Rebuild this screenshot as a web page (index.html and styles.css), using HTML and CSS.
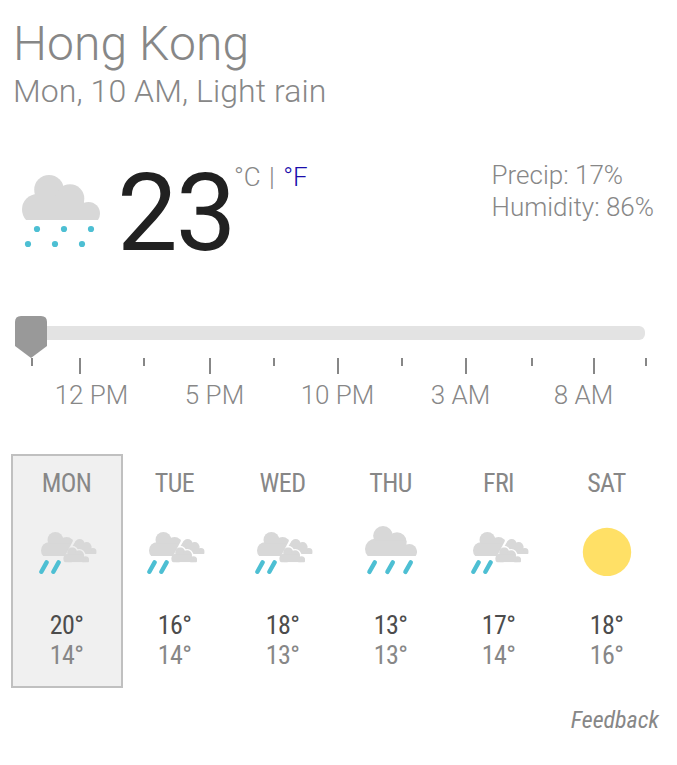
FILE: index.html
```
<!DOCTYPE html>
<html lang="en">
<head>
    <meta charset="UTF-8">
    <meta name="viewport" content="width=device-width, initial-scale=1.0">
    <title>Weather - Hong Kong</title>
    <link rel="stylesheet" href="styles.css">
</head>
<body>
    <!-- Shared icon shapes -->
    <svg class="defs" width="0" height="0">
        <defs>
            <clipPath id="base"><rect width="78" height="45"/></clipPath>
            <g id="puffs">
                <circle cx="15.5" cy="34.5" r="15.5"/>
                <circle cx="27" cy="14.8" r="14.8"/>
                <circle cx="48" cy="23.5" r="14.3"/>
                <circle cx="66.5" cy="38.5" r="11.5"/>
                <rect x="14" y="22" width="48" height="23"/>
                <rect x="60" y="34" width="8" height="11"/>
            </g>
            <g id="cloud" clip-path="url(#base)">
                <use href="#puffs"/>
            </g>
            <mask id="cut-main" maskUnits="userSpaceOnUse" x="0" y="0" width="60" height="50">
                <rect width="60" height="50" fill="#fff"/>
                <path d="M37 4 L26.1 25 H60 V4 Z" fill="#000"/>
            </mask>
            <mask id="cut-back" maskUnits="userSpaceOnUse" x="0" y="0" width="60" height="50">
                <rect width="60" height="50" fill="#fff"/>
                <use href="#puffs" transform="translate(24.2 16.2) scale(.333)" fill="#000" stroke="#000" stroke-width="8"/>
            </mask>
            <symbol id="partly" viewBox="0 0 60 46">
                <g fill="#d8d8d8">
                    <g mask="url(#cut-main)"><use href="#cloud" transform="translate(2 1) scale(.533)"/></g>
                    <g mask="url(#cut-back)">
                        <use href="#cloud" transform="translate(31.7 8) scale(.333)"/>
                        <path d="M36.6 10 L30 21 H42 Z"/>
                    </g>
                    <use href="#cloud" transform="translate(24.2 16.2) scale(.333)"/>
                </g>
                <path d="M7.6 31.4 L2.4 40.8 M19.6 31.4 L14.4 40.8" stroke="#4dbfd3" stroke-width="4.4" stroke-linecap="round"/>
            </symbol>
        </defs>
    </svg>

    <div class="weather">
        <h1>Hong Kong</h1>
        <div class="summary">Mon, 10 AM, Light rain</div>

        <div class="current">
            <svg class="current-icon" width="80" height="74" viewBox="0 0 80 74">
                <use href="#cloud" fill="#d8d8d8"/>
                <g fill="#4dbfd3">
                    <circle cx="15" cy="54" r="3.1"/>
                    <circle cx="42" cy="54" r="3.1"/>
                    <circle cx="69" cy="54" r="3.1"/>
                    <circle cx="6" cy="69" r="3.1"/>
                    <circle cx="33" cy="69" r="3.1"/>
                    <circle cx="60" cy="69" r="3.1"/>
                </g>
            </svg>
            <div class="temp">23</div>
            <div class="units">°C <span class="sep">|</span> <a href="#">°F</a></div>
            <div class="details">
                <div>Precip: 17%</div>
                <div>Humidity: 86%</div>
            </div>
        </div>

        <div class="slider">
            <svg width="662" height="60" viewBox="0 0 662 60">
                <rect x="15" y="10" width="630" height="14" rx="6" fill="#e3e3e3"/>
                <path d="M21 0 H41 Q47 0 47 6 V30 L31 42 L15 30 V6 Q15 0 21 0 Z" fill="#999"/>
                <path d="M32 42V50 M144 42V50 M274 42V50 M402 42V50 M532 42V50 M646 42V50" stroke="#878787" stroke-width="2"/>
                <path d="M80 42V58 M210 42V58 M338 42V58 M466 42V58 M594 42V58" stroke="#878787" stroke-width="2"/>
            </svg>
            <div class="hours">
                <span>12 PM</span>
                <span>5 PM</span>
                <span>10 PM</span>
                <span>3 AM</span>
                <span>8 AM</span>
            </div>
        </div>

        <div class="days">
            <div class="day active">
                <div class="name">MON</div>
                <svg class="icon" width="60" height="46"><use href="#partly"/></svg>
                <div class="high">20°</div>
                <div class="low">14°</div>
            </div>
            <div class="day">
                <div class="name">TUE</div>
                <svg class="icon" width="60" height="46"><use href="#partly"/></svg>
                <div class="high">16°</div>
                <div class="low">14°</div>
            </div>
            <div class="day">
                <div class="name">WED</div>
                <svg class="icon" width="60" height="46"><use href="#partly"/></svg>
                <div class="high">18°</div>
                <div class="low">13°</div>
            </div>
            <div class="day">
                <div class="name">THU</div>
                <svg class="icon tall" width="52" height="50" viewBox="0 0 52 50">
                    <use href="#cloud" transform="scale(.667)" fill="#d8d8d8"/>
                    <path d="M9.8 36.4 L4.4 45.9 M27.8 36.4 L22.4 45.9 M45.8 36.4 L40.4 45.9" stroke="#4dbfd3" stroke-width="4.4" stroke-linecap="round"/>
                </svg>
                <div class="high">13°</div>
                <div class="low">13°</div>
            </div>
            <div class="day">
                <div class="name">FRI</div>
                <svg class="icon" width="60" height="46"><use href="#partly"/></svg>
                <div class="high">17°</div>
                <div class="low">14°</div>
            </div>
            <div class="day">
                <div class="name">SAT</div>
                <svg class="icon tall" width="52" height="50" viewBox="0 0 52 50">
                    <circle cx="26" cy="26" r="24.2" fill="#ffe066"/>
                </svg>
                <div class="high">18°</div>
                <div class="low">16°</div>
            </div>
        </div>

        <div class="feedback">Feedback</div>
    </div>
</body>
</html>
```
FILE: styles.css
```
* {
    box-sizing: border-box;
}
body {
    margin: 0;
    background-color: #fff;
    font-family: Roboto, sans-serif;
    font-weight: 300;
    color: #878787;
}
.defs {
    display: block;
}
.weather {
    padding-top: 16px;
}
h1 {
    margin: 0 0 0 13px;
    font-size: 48px;
    font-weight: 300;
    line-height: 56px;
    letter-spacing: 0.1px;
}
.summary {
    margin-left: 13px;
    font-size: 32px;
    line-height: 38px;
    letter-spacing: 0.08px;
}
.current {
    display: flex;
    align-items: flex-start;
    height: 206px;
    padding: 40px 23px 0 22px;
}
.current-icon {
    margin-top: 25px;
}
.temp {
    margin-left: 15px;
    width: 117px;
    font-size: 108px;
    font-weight: 400;
    line-height: 126px;
    letter-spacing: -2px;
    color: #212121;
}
.units {
    margin-top: 12px;
    font-size: 26px;
    line-height: 30px;
}
.sep {
    margin: 0 2px;
}
.units a {
    color: #1a0dab;
    text-decoration: none;
}
.details {
    margin: 9px 0 0 auto;
    font-size: 26px;
    line-height: 32px;
}
.slider svg {
    display: block;
}
.hours {
    display: grid;
    grid-template-columns: repeat(5, 123px);
    margin: 4px 0 0 30px;
    font-size: 26px;
    line-height: 30px;
    text-align: center;
}
.days {
    display: grid;
    grid-template-columns: repeat(6, 108px);
    margin: 44px 0 0 13px;
    font-family: "Roboto Condensed", Roboto, sans-serif;
    font-stretch: 75%;
    font-size: 26px;
    font-weight: 400;
    line-height: 30px;
    letter-spacing: -0.6px;
    text-indent: -1px;
    text-align: center;
}
.day {
    height: 234px;
    padding-top: 12px;
    border: 2px solid transparent;
}
.day.active {
    margin: 0 -2px;
    background-color: #f0f0f0;
    border-color: #c0c0c0;
}
.icon {
    display: block;
    margin: 33px auto;
    transform: translateX(2px);
}
.icon.tall {
    margin: 28px auto 34px;
    transform: none;
}
.high {
    color: #4c4c4c;
}
.feedback {
    margin: 18px 18px 0 0;
    font-family: "Roboto Condensed", Roboto, sans-serif;
    font-stretch: 75%;
    font-size: 24px;
    font-style: italic;
    font-weight: 400;
    line-height: 28px;
    text-align: right;
}
```
